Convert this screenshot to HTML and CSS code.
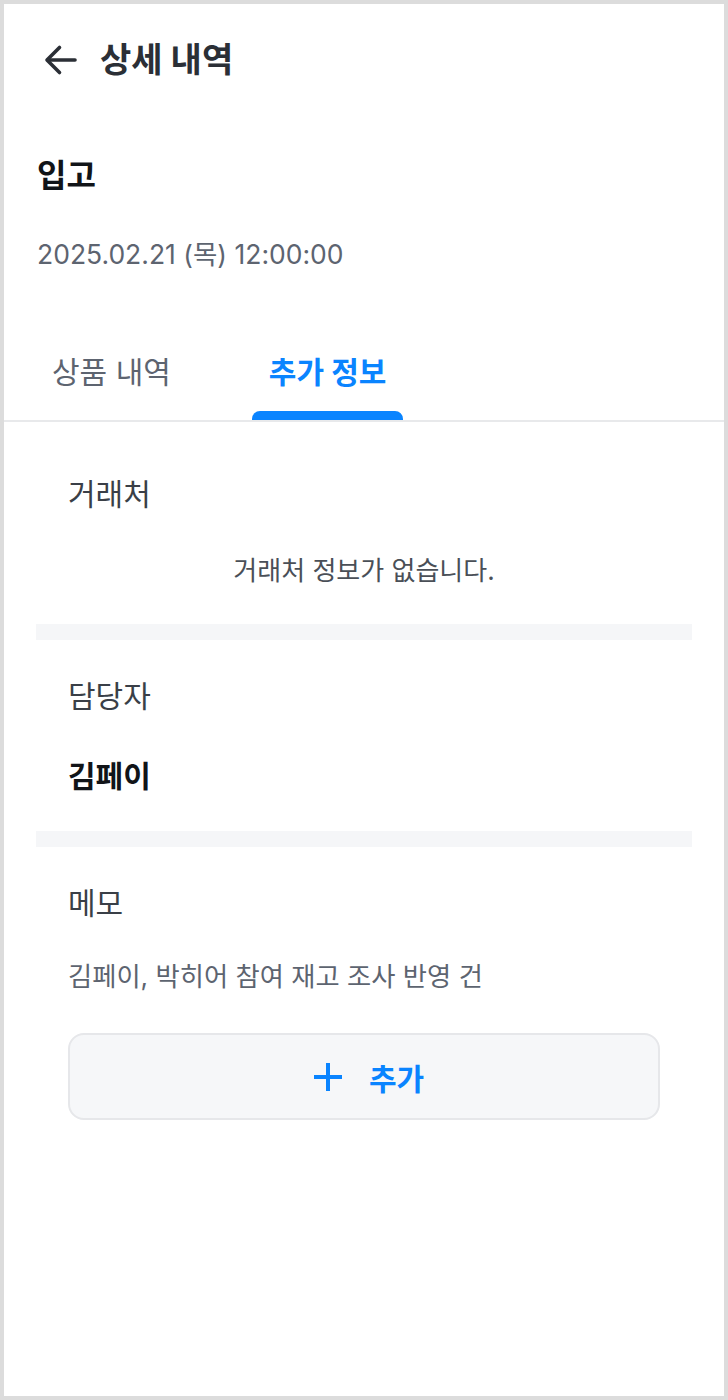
FILE: index.html
```html
<!DOCTYPE html>
<html lang="ko">

<head>
    <meta charset="UTF-8">
    <meta name="viewport" content="width=device-width, initial-scale=1.0">
    <title>상세 내역</title>
    <link rel="stylesheet" href="styles.css">
</head>

<body>
    <div class="page">
        <!-- 상단 헤더 -->
        <div class="header">
            <a class="back" href="#">
                <svg width="34" height="32" viewBox="0 0 34 32" fill="none" stroke="currentColor" stroke-width="3.6" stroke-linecap="round" stroke-linejoin="round">
                    <path d="M31 16H4"/>
                    <path d="M15.5 3.5L3 16l12.5 12.5"/>
                </svg>
            </a>
            <h1>상세 내역</h1>
        </div>

        <div class="summary">
            <h2>입고</h2>
            <p class="date">2025.02.21 (목) 12:00:00</p>
        </div>

        <!-- 탭 -->
        <div class="tabs">
            <span class="tab">상품 내역</span>
            <span class="tab on">추가 정보</span>
        </div>

        <div class="content">
            <div class="section first">
                <p class="label">거래처</p>
                <p class="empty">거래처 정보가 없습니다.</p>
            </div>
            <div class="divider"></div>
            <div class="section">
                <p class="label">담당자</p>
                <p class="name">김페이</p>
            </div>
            <div class="divider"></div>
            <div class="section">
                <p class="label">메모</p>
                <p class="memo">김페이, 박히어 참여 재고 조사 반영 건</p>
                <button class="add" type="button">
                    <svg width="28" height="28" viewBox="0 0 28 28" fill="none" stroke="currentColor" stroke-width="4">
                        <path d="M14 0v28M0 14h28"/>
                    </svg>
                    <span>추가</span>
                </button>
            </div>
        </div>
    </div>
</body>

</html>
```

FILE: styles.css
```css
* {
    margin: 0;
    padding: 0;
    box-sizing: border-box;
}

body {
    background: #fff;
    font-family: Inter, "Noto Sans CJK KR", sans-serif;
}

.page {
    height: 1400px;
    border: 4px solid #dcdcdc;
    background: #fff;
}

.header {
    display: flex;
    align-items: center;
    height: 112px;
    padding-left: 40px;
}

.header .back {
    display: flex;
    color: #2b2f36;
    margin-right: 22px;
}

.header h1 {
    font-size: 34px;
    font-weight: bold;
    color: #2b2f36;
    line-height: 40px;
}

.summary {
    padding: 40px 33px 0;
}

.summary h2 {
    font-size: 32px;
    font-weight: bold;
    color: #111418;
    line-height: 40px;
}

.summary .date {
    margin-top: 40px;
    font-size: 26.5px;
    color: #5d6470;
    line-height: 36px;
}

.tabs {
    display: flex;
    gap: 64px;
    margin-top: 80px;
    padding-left: 31px;
    border-bottom: 2px solid #e8e9eb;
}

.tab {
    position: relative;
    height: 68px;
    padding: 0 17px;
    font-size: 30px;
    line-height: 40px;
    color: #5d6470;
}

.tab.on {
    color: #0a84ff;
    font-weight: bold;
}

.tab.on::after {
    content: "";
    position: absolute;
    left: 0;
    right: 0;
    bottom: 0;
    height: 9px;
    background: #0a84ff;
    border-radius: 8px 8px 0 0;
}

.content {
    padding: 0 32px;
}

.section {
    padding: 36px 32px 35px;
}

.section.first {
    padding-top: 52px;
}

.section .label {
    font-size: 30px;
    line-height: 40px;
    color: #3a3f47;
}

.section .empty {
    margin-top: 39px;
    text-align: center;
    font-size: 26px;
    line-height: 36px;
    color: #4a4f57;
}

.section .name {
    margin-top: 40px;
    font-size: 30px;
    font-weight: bold;
    line-height: 40px;
    color: #111418;
}

.section .memo {
    margin-top: 36px;
    font-size: 26.3px;
    line-height: 36px;
    color: #5d6470;
}

.divider {
    height: 16px;
    background: #f5f6f8;
}

.add {
    display: flex;
    align-items: center;
    justify-content: center;
    gap: 27px;
    width: 100%;
    height: 87px;
    margin-top: 38px;
    padding-left: 10px;
    border: 2px solid #e6e7ea;
    border-radius: 16px;
    background: #f6f7f9;
    color: #0a84ff;
    font-family: inherit;
    font-size: 30px;
    font-weight: bold;
    cursor: pointer;
}
```
